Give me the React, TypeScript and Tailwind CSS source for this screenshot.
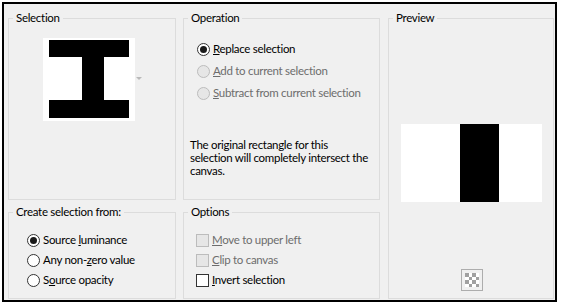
import React from "react";

const F = { fontFamily: '"Segoe UI", Lato, "Liberation Sans", sans-serif' };
const TXT = "text-[11.5px] tracking-[-0.3px] leading-[16px]";

function Group({
  label,
  className,
  children,
}: {
  label: string;
  className?: string;
  children?: React.ReactNode;
}) {
  return (
    <div className={"relative border border-[#dcdcdc] " + (className ?? "")}>
      <span className={"absolute left-[4px] top-[-9px] bg-[#f0f0f0] px-[3px] text-black " + TXT}>{label}</span>
      {children}
    </div>
  );
}

function Radio({ checked, disabled, children }: { checked?: boolean; disabled?: boolean; children: React.ReactNode }) {
  return (
    <div className="flex h-[20px] items-center">
      <span
        className={
          "flex h-[13px] w-[13px] items-center justify-center rounded-full border " +
          (disabled ? "border-[#bcbcbc] bg-[#e6e6e6]" : "border-[#333333] bg-white")
        }
      >
        {checked && <span className="h-[7px] w-[7px] rounded-full bg-[#1a1a1a]" />}
      </span>
      <span className={"ml-[3px] " + TXT + " " + (disabled ? "text-[#6d6d6d]" : "text-black")}>{children}</span>
    </div>
  );
}

function Check({ disabled, children }: { disabled?: boolean; children: React.ReactNode }) {
  return (
    <div className="flex h-[20px] items-center">
      <span
        className={
          "h-[13px] w-[13px] border " + (disabled ? "border-[#bcbcbc] bg-[#e6e6e6]" : "border-[#333333] bg-white")
        }
      />
      <span className={"ml-[3px] " + TXT + " " + (disabled ? "text-[#6d6d6d]" : "text-black")}>{children}</span>
    </div>
  );
}

export default function App() {
  return (
    <div className="h-[308px] w-[562px] bg-white pl-[2px] pt-[2px]" style={F}>
      <div className="flex h-[300px] w-[555px] border-2 border-black bg-[#f0f0f0] pb-[1px] pl-[4px] pr-[1px] pt-[14px]">
        <div className="flex w-[168px] flex-col">
          <Group label="Selection" className="h-[182px]">
            <div className="ml-[34px] mt-[19px] flex items-center">
              <div className="h-[83px] w-[92px] bg-white">
                <svg width="92" height="83" viewBox="0 0 92 83">
                  <rect x="6" y="2" width="80" height="17" fill="#000" />
                  <rect x="39" y="19" width="22" height="43" fill="#000" />
                  <rect x="6" y="62" width="80" height="18" fill="#000" />
                </svg>
              </div>
              <svg width="6" height="4" viewBox="0 0 6 4" className="ml-[1px] mt-[-1px]">
                <path d="M0 0 L6 0 L3 3 Z" fill="#b9b9b9" />
              </svg>
            </div>
          </Group>
          <Group label="Create selection from:" className="mt-[12px] h-[87px]">
            <div className="ml-[18px] mt-[17px] flex flex-col">
              <Radio checked>
                Source <u>l</u>uminance
              </Radio>
              <Radio>
                Any non-<u>z</u>ero value
              </Radio>
              <Radio>
                S<u>o</u>urce opacity
              </Radio>
            </div>
          </Group>
        </div>
        <div className="ml-[7px] flex w-[197px] flex-col">
          <Group label="Operation" className="h-[182px]">
            <div className="ml-[13px] mt-[20px] flex flex-col gap-[2px]">
              <Radio checked>
                <u>R</u>eplace selection
              </Radio>
              <Radio disabled>
                <u>A</u>dd to current selection
              </Radio>
              <Radio disabled>
                <u>S</u>ubtract from current selection
              </Radio>
            </div>
            <p className="ml-[6px] mt-[35px] w-[185px] text-[11.5px] leading-[13px] tracking-[-0.3px] text-black">
              The original rectangle for this
              <br />
              selection will completely intersect the
              <br />
              canvas.
            </p>
          </Group>
          <Group label="Options" className="mt-[12px] h-[87px]">
            <div className="ml-[12px] mt-[17px] flex flex-col">
              <Check disabled>
                <u>M</u>ove to upper left
              </Check>
              <Check disabled>
                <u>C</u>lip to canvas
              </Check>
              <Check>
                <u>I</u>nvert selection
              </Check>
            </div>
          </Group>
        </div>
        <div className="ml-[8px] w-[166px]">
          <Group label="Preview" className="flex h-[281px] flex-col items-center">
            <div className="mt-[105px] flex h-[78px] w-[141px] bg-white">
              <div className="ml-[59px] h-full w-[39px] bg-black" />
            </div>
            <div className="ml-[2px] mt-[67px] grid h-[22px] w-[22px] grid-cols-4 grid-rows-4 gap-0 border border-[#adadad] p-[3px]">
              {Array.from({ length: 16 }).map((_, i) => {
                const r = Math.floor(i / 4);
                const c = i % 4;
                return <span key={i} className={(r + c) % 2 === 0 ? "bg-[#a0a0a0]" : "bg-white"} />;
              })}
            </div>
          </Group>
        </div>
      </div>
    </div>
  );
}
